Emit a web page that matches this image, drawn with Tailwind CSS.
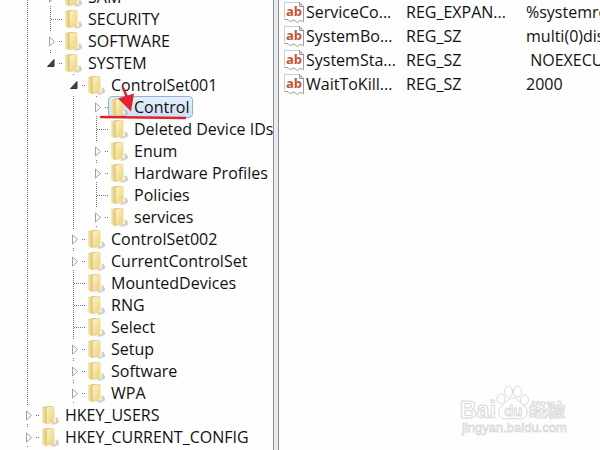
<!DOCTYPE html>
<html lang="en">
<head>
  <meta charset="UTF-8" />
  <meta name="viewport" content="width=device-width, initial-scale=1" />
  <title>Registry Editor</title>
  <script src="https://cdn.jsdelivr.net/npm/@tailwindcss/browser@4"></script>
</head>
<body class="bg-[#fefefe] text-[#111] h-screen overflow-hidden flex font-['Open_Sans','Noto_Sans_CJK_SC',sans-serif] text-[16px]">
  <svg class="absolute w-0 h-0">
    <!-- tree connectors, one 23x22 cell each -->
    <symbol id="line" viewBox="0 0 23 22"><path d="M11.5 0V22" stroke="#777" stroke-dasharray="1 1"/></symbol>
    <symbol id="tee" viewBox="0 0 23 22"><path d="M11.5 0V22M12 11.5H23" stroke="#777" stroke-dasharray="1 1"/></symbol>
    <symbol id="closed" viewBox="0 0 23 22"><path d="M11.5 0V1M11.5 20V21M20 11.5H23" stroke="#777" stroke-dasharray="1 1"/><path d="M10.5 7v9l5-4.500z" fill="#fff" stroke="#a0a0a0"/></symbol>
    <symbol id="open" viewBox="0 0 23 22"><path d="M11.5 0V1M20 11.500H23" stroke="#777" stroke-dasharray="1 1"/><path d="M15 7.500v7h-6.500z" fill="#444" stroke="#333"/></symbol>
    <linearGradient id="gold" x1="0" y1="0" x2="1" y2="1"><stop offset="0" stop-color="#fcf4c8"/><stop offset="1" stop-color="#e8cb6c"/></linearGradient>
    <linearGradient id="inner" x1="0" y1="0" x2="1" y2="0"><stop offset="0" stop-color="#eedb98"/><stop offset="1" stop-color="#c9ae66"/></linearGradient>
    <linearGradient id="flap" x1="0" y1="0" x2="1" y2="0"><stop offset="0" stop-color="#faecb2"/><stop offset="1" stop-color="#dcc073"/></linearGradient>
    <symbol id="folder" viewBox="0 0 18 20">
      <path d="M10 19.500l6-7.500 2 3.500v2l-4 2z" fill="#b9b9c4" opacity=".7"/>
      <path d="M1 2l5-1 7 .5V16l-7 2-5-2z" fill="url(#inner)"/>
      <path d="M5.500 3.500L7 2l6.500-.8V13.500l1.500.5v3l-2 .5-7.500 1.800z" fill="url(#gold)"/>
      <path d="M12.500 13.500l2.500.7v3l-2.500.6z" fill="#fbf0c0"/>
      <path d="M1 2.500l4.500 2v14.800l-4.500-2z" fill="url(#flap)"/>
    </symbol>
    <symbol id="str" viewBox="0 0 20 21">
      <path d="M.5 .5h15l4 4v15.500l-3-1-2.500 1.500-3.500-2.500-4 1.500-2-2h-4z" fill="#fff"/>
      <path d="M.5 17V.5h15" fill="none" stroke="#c9ced2"/>
      <path d="M.5 17.500h3.500l2 2 4-1.500 3.500 2.500 2-2 4 1V4.500" fill="none" stroke="#989ca0"/>
      <path d="M15.500 .5v4h4z" fill="#e8edf0" stroke="#8f9498"/>
      <text x="2" y="14" font-size="13" font-weight="700" fill="#c65536">ab</text>
    </symbol>
  </svg>

  <ul id="tree" class="relative w-[273px] shrink-0 -mt-[14px] pl-4"></ul>

  <div class="w-[6px] shrink-0 bg-[#e9ebee] border-x border-[#8b8d92]"></div>

  <main class="flex-1 min-w-0 overflow-hidden pl-[5px]">
    <table class="w-[420px] table-fixed whitespace-nowrap">
      <tbody id="values"></tbody>
    </table>
  </main>

  <!-- watermark -->
  <svg class="absolute right-[30px] bottom-[12px] w-[112px] h-[54px] font-['Liberation_Sans','Noto_Sans_CJK_SC',sans-serif]" viewBox="0 0 112 54" fill="#fff" stroke="#d9d9d9" stroke-width="1">
    <text x="2" y="34" font-size="23" font-weight="700">Bai</text>
    <ellipse cx="43" cy="15" rx="4" ry="5"/>
    <ellipse cx="50.500" cy="7.500" rx="4" ry="5.500"/>
    <ellipse cx="59.500" cy="7.500" rx="4" ry="5.500"/>
    <ellipse cx="66.500" cy="16" rx="4" ry="5"/>
    <path d="M55 14c5 0 7 5 11 8 6 5 3 13-3 13-3 0-5-.5-8-.5s-5 .5-8 .5c-6 0-9-8-3-13 4-3 6-8 11-8z"/>
    <text x="46" y="32" font-size="15" font-weight="700">du</text>
    <text x="71" y="33" font-size="18" font-weight="700">经验</text>
    <text x="4" y="48" font-size="13" stroke-width=".8">jingyan.baidu.com</text>
  </svg>

  <script>
    const tree = [
      [1, 'closed', 'SAM'], [1, 'tee', 'SECURITY'], [1, 'closed', 'SOFTWARE'], [1, 'open', 'SYSTEM'],
      [2, 'open', 'ControlSet001'], [3, 'closed', 'Control'], [3, 'tee', 'Deleted Device IDs'],
      [3, 'closed', 'Enum'], [3, 'closed', 'Hardware Profiles'], [3, 'tee', 'Policies'], [3, 'closed', 'services'],
      [2, 'closed', 'ControlSet002'], [2, 'closed', 'CurrentControlSet'], [2, 'tee', 'MountedDevices'],
      [2, 'tee', 'RNG'], [2, 'tee', 'Select'], [2, 'closed', 'Setup'], [2, 'closed', 'Software'], [2, 'closed', 'WPA'],
      [0, 'closed', 'HKEY_USERS'], [0, 'closed', 'HKEY_CURRENT_CONFIG'],
    ];
    const cell = id => `<svg class="w-[23px] h-[22px] shrink-0"><use href="#${id}"/></svg>`;
    // red pen marks over the selected key
    const marks = `<svg class="absolute left-[82px] -top-[10px] w-[92px] h-[36px] z-10 pointer-events-none" viewBox="0 0 92 36">
      <path d="M3 31L87 32" stroke="#e0242f" stroke-width="2.500" stroke-linecap="round"/>
      <path d="M25 2l4 9" stroke="#e0242f" stroke-width="2.500" stroke-linecap="round"/>
      <path d="M20 12.500L36 7.500 33 25.500z" fill="#e0242f"/></svg>`;
    document.getElementById('tree').innerHTML = tree.map(([depth, kind, name]) => {
      let cells = '';
      for (let i = 0; i < depth; i++) cells += cell(i === 1 ? 'none' : 'line');
      const picked = name === 'Control';
      const sel = picked ? 'border-[#8fb4dc] bg-linear-to-b from-[#e8f0fb] to-[#cfdff4]' : 'border-transparent';
      return `<li class="relative flex h-[22px] items-center">${cells}${cell(kind)}
        <a href="#" class="flex h-[22px] items-center gap-[6px] rounded-sm border pl-px pr-[3px] whitespace-nowrap ${sel}">
          <svg class="w-[18px] h-[20px] shrink-0"><use href="#folder"/></svg>${name}</a>${picked ? marks : ''}</li>`;
    }).join('');

    const values = [
      ['ServiceCo...', 'REG_EXPAN...', '%systemroot%'],
      ['SystemBo...', 'REG_SZ', 'multi(0)disk(0)'],
      ['SystemSta...', 'REG_SZ', '&nbsp;NOEXECUTE'],
      ['WaitToKill...', 'REG_SZ', '2000'],
    ];
    document.getElementById('values').innerHTML = values.map(([name, type, data]) => `
      <tr class="h-6">
        <td class="w-[122px] p-0"><span class="flex items-center gap-[2px]"><svg class="w-5 h-[21px] shrink-0"><use href="#str"/></svg>${name}</span></td>
        <td class="w-[120px] p-0">${type}</td>
        <td class="p-0">${data}</td>
      </tr>`).join('');
  </script>
</body>
</html>
